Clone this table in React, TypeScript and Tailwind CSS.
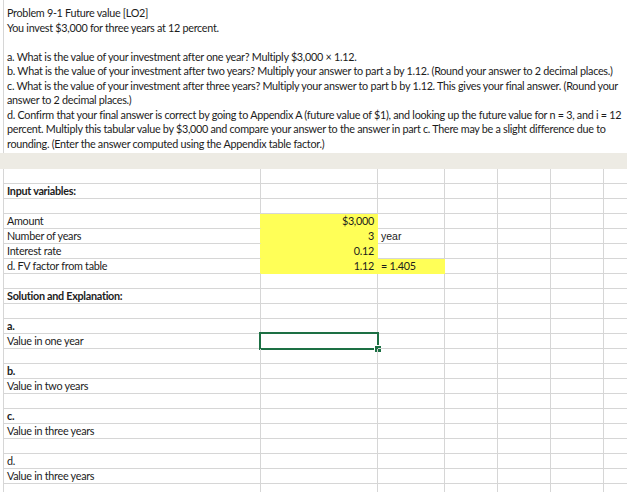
import React from "react";

type Cell = {
  text?: string;
  bold?: boolean;
  align?: "left" | "right";
  yellow?: boolean;
  arial?: boolean;
  selected?: boolean;
};

type Row = Cell[];

const intro = [
  "Problem 9-1 Future value [LO2]",
  "You invest $3,000 for three years at 12 percent.",
  "",
  "a.  What is the value of your investment after one year? Multiply $3,000 × 1.12.",
  "b. What is the value of your investment after two years? Multiply your answer to part a by 1.12. (Round your answer to 2 decimal places.)",
  "c. What is the value of your investment after three years? Multiply your answer to part b by 1.12. This gives your final answer. (Round your",
  "answer to 2 decimal places.)",
  "d.  Confirm that your final answer is correct by going to Appendix A (future value of $1), and looking up the future value for n = 3, and i = 12",
  "percent. Multiply this tabular value by $3,000 and compare your answer to the answer in part c. There may be a slight difference due to",
  "rounding. (Enter the answer computed using the Appendix table factor.)",
];

const rows: Row[] = [
  [],
  [{ text: "Input variables:", bold: true }],
  [],
  [{ text: "Amount" }, { text: "$3,000", align: "right", yellow: true }],
  [{ text: "Number of years" }, { text: "3", align: "right", yellow: true }, { text: "year", arial: true }],
  [{ text: "Interest rate" }, { text: "0.12", align: "right", yellow: true }],
  [
    { text: "d. FV factor from table" },
    { text: "1.12", align: "right", yellow: true },
    { text: "= 1.405", yellow: true },
  ],
  [],
  [{ text: "Solution and Explanation:", bold: true }],
  [],
  [{ text: "a.", bold: true }],
  [{ text: "Value in one year" }, { selected: true }],
  [],
  [{ text: "b.", bold: true }],
  [{ text: "Value in two years" }],
  [],
  [{ text: "c.", bold: true }],
  [{ text: "Value in three years" }],
  [],
  [{ text: "d." }],
  [{ text: "Value in three years" }],
  [],
];

const widths = ["w-[257px]", "w-[117px]", "w-[67px]", "w-[53px]", "w-[53px]", "w-[53px]", "flex-1"];

function GridCell({ cell, col, nextYellow }: { cell?: Cell; col: number; nextYellow: boolean }) {
  const yellow = cell?.yellow;
  const rightYellow = yellow || nextYellow;
  return (
    <div
      className={`relative h-[15px] shrink-0 border-b px-[3px] leading-[14px] whitespace-nowrap overflow-visible ${widths[col]} ${
        col < 6 ? "border-r" : ""
      } ${yellow ? "bg-[#ffff57] border-b-[#ffff57]" : "border-b-[#d6d6d6]"} ${
        rightYellow ? "border-r-[#ffff57]" : "border-r-[#d6d6d6]"
      } ${cell?.align === "right" ? "text-right" : "text-left"} ${cell?.bold ? "font-bold" : ""} ${
        cell?.arial ? "font-['Liberation_Sans',sans-serif] text-[10.5px] tracking-normal" : ""
      }`}
    >
      {cell?.text}
      {cell?.selected && (
        <>
          <div className="absolute left-[-2px] top-[-2px] h-[18px] w-[120px] border-2 border-[#1d7044]" />
          <div className="absolute right-[-4px] bottom-[-4px] h-[6px] w-[6px] bg-[#1d7044] ring-1 ring-white" />
        </>
      )}
    </div>
  );
}

export default function App() {
  return (
    <main className="h-[492px] w-[627px] overflow-hidden bg-white font-['Lato',sans-serif] text-[10.8px] tracking-[-0.28px] text-[#1c1c1c]">
      <div className="ml-[3px] h-[153px] border-l border-[#d6d6d6] pl-[3px] pt-[6px]">
        {intro.map((line, i) => (
          <div key={i} className="h-[14.5px] leading-[14.5px] whitespace-nowrap">
            {line}
          </div>
        ))}
      </div>
      <div className="h-[16px] bg-[#edebe4]" />
      <div className="ml-[3px] border-l border-[#d6d6d6]">
        {rows.map((row, r) => (
          <div key={r} className="flex">
            {widths.map((_, c) => (
              <GridCell key={c} cell={row[c]} col={c} nextYellow={!!row[c + 1]?.yellow} />
            ))}
          </div>
        ))}
      </div>
    </main>
  );
}
